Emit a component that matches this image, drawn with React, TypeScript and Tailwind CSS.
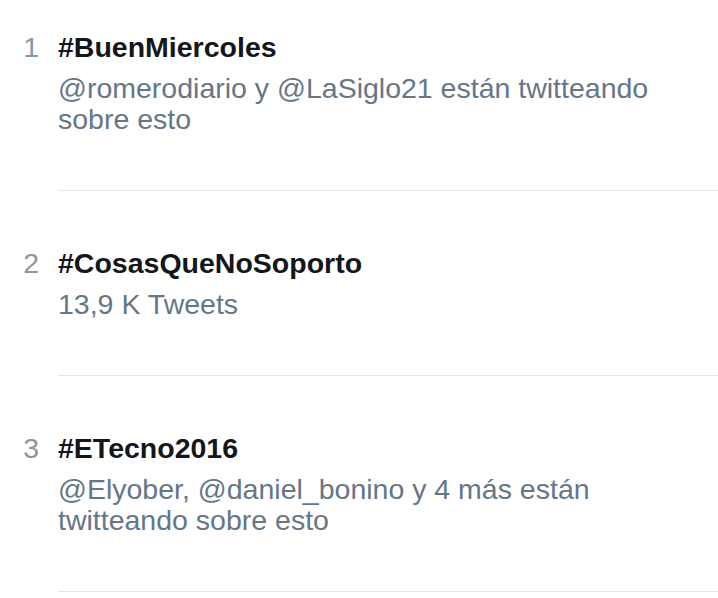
const trends = [
  {
    rank: 1,
    tag: "#BuenMiercoles",
    detail: "@romerodiario y @LaSiglo21 están twitteando sobre esto",
  },
  { rank: 2, tag: "#CosasQueNoSoporto", detail: "13,9 K Tweets" },
  {
    rank: 3,
    tag: "#ETecno2016",
    detail: "@Elyober, @daniel_bonino y 4 más están twitteando sobre esto",
  },
];

export default function App() {
  return (
    <div
      className="min-h-screen w-full bg-white pt-[30px]"
      style={{ fontFamily: '"Liberation Sans", Arial, sans-serif' }}
    >
      {trends.map((t, i) => (
        <div key={t.rank} className="flex gap-[19px]">
          {/* número */}
          <div
            className={`w-[39px] shrink-0 text-right text-[28.5px] leading-[34px] text-[#8a96a2] ${
              i === 0 ? "" : "pt-[55px]"
            }`}
          >
            {t.rank}
          </div>

          {/* tendencia */}
          <div
            className={`flex-1 border-b border-[#e1e5e9] pb-[55px] ${
              i === 0 ? "" : "pt-[55px]"
            }`}
          >
            <div className="text-[28.5px] font-bold leading-[34px] text-[#14171a]">
              {t.tag}
            </div>
            <div className="mt-[9px] pr-[20px] text-[28.5px] leading-[31px] text-[#657786]">
              {t.detail}
            </div>
          </div>
        </div>
      ))}
    </div>
  );
}
